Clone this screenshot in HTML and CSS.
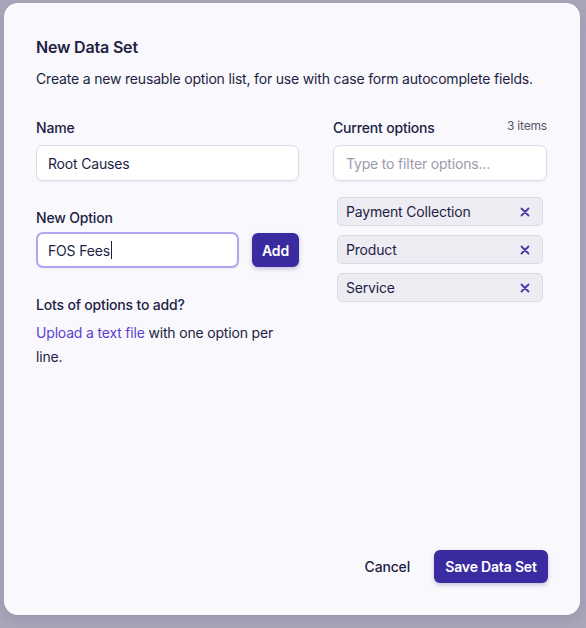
FILE: index.html
```html
<!DOCTYPE html>
<html lang="en">
<head>
<meta charset="utf-8">
<title>New Data Set</title>
<link rel="stylesheet" href="styles.css">
</head>
<body>
<div class="modal">
  <div class="modal-body">
    <h1 class="title">New Data Set</h1>
    <p class="desc">Create a new reusable option list, for use with case form autocomplete fields.</p>
    <div class="grid">
      <div class="col-left">
        <div class="label name-label">Name</div>
        <div class="input">Root Causes</div>
        <div class="label option-label">New Option</div>
        <div class="add-row">
          <div class="input input-focus">FOS Fees<span class="caret"></span></div>
          <button class="btn btn-add">Add</button>
        </div>
        <div class="lots">Lots of options to add?</div>
        <p class="upload"><span class="link">Upload a text file</span> with one option per line.</p>
      </div>
      <div class="col-right">
        <div class="right-head">
          <div class="label">Current options</div>
          <div class="count">3 items</div>
        </div>
        <div class="input placeholder">Type to filter options...</div>
        <div class="chips">
          <div class="chip"><span>Payment Collection</span><svg class="x" viewBox="0 0 10 10"><path d="M1.5 1.5L8.5 8.5M8.5 1.5L1.5 8.5"/></svg></div>
          <div class="chip"><span>Product</span><svg class="x" viewBox="0 0 10 10"><path d="M1.5 1.5L8.5 8.5M8.5 1.5L1.5 8.5"/></svg></div>
          <div class="chip"><span>Service</span><svg class="x" viewBox="0 0 10 10"><path d="M1.5 1.5L8.5 8.5M8.5 1.5L1.5 8.5"/></svg></div>
        </div>
      </div>
    </div>
  </div>
  <div class="footer">
    <button class="btn-cancel">Cancel</button>
    <button class="btn btn-save">Save Data Set</button>
  </div>
</div>
</body>
</html>
```

FILE: styles.css
```css
* { box-sizing: border-box; }
html, body { margin: 0; padding: 0; }
body {
  background: #a9a6b9;
  font-family: Inter, "Noto Sans", sans-serif;
  color: #221e44;
  letter-spacing: -0.18px;
  width: 586px;
  height: 628px;
  overflow: hidden;
}
.modal {
  margin: 3px 0 0 4px;
  width: 576px;
  height: 612px;
  background: #f9f8fc;
  border-radius: 14px;
  box-shadow: 0 4px 14px rgba(40, 30, 80, 0.12);
  padding: 32px 32px 32px 32px;
  display: flex;
  flex-direction: column;
}
.modal-body { flex: 1; }
.title {
  margin: 0;
  font-size: 16px;
  line-height: 24px;
  font-weight: 600;
}
.desc {
  margin: 10px 0 0;
  font-size: 14px;
  line-height: 20px;
}
.grid {
  margin-top: 29px;
  display: grid;
  grid-template-columns: 263px 214px;
  column-gap: 34px;
}
.label {
  font-size: 14px;
  line-height: 20px;
  font-weight: 500;
}
.name-label { margin-bottom: 7px; }
.option-label { margin-top: 27px; margin-bottom: 4px; }
.input {
  height: 36px;
  background: #ffffff;
  border: 1px solid #dedce8;
  border-radius: 7px;
  box-shadow: 0 1px 2px rgba(30, 20, 70, 0.06);
  padding: 0 11px;
  display: flex;
  align-items: center;
  font-size: 14px;
  color: #221e44;
}
.input-focus {
  flex: 1;
  border: 2px solid #b0a5f0;
  padding: 0 10px;
}
.caret {
  display: inline-block;
  width: 1px;
  height: 18px;
  background: #221e44;
  margin-left: 1px;
}
.add-row {
  display: flex;
  align-items: center;
  gap: 13px;
}
.btn {
  border: none;
  background: #3a2ca0;
  color: #ffffff;
  font-family: Inter, "Noto Sans", sans-serif;
  letter-spacing: -0.18px;
  font-size: 14px;
  font-weight: 600;
  border-radius: 6px;
  box-shadow: 0 2px 4px rgba(40, 30, 110, 0.25);
  cursor: pointer;
}
.btn-add {
  width: 47px;
  height: 34px;
  padding: 0;
}
.lots {
  margin-top: 27px;
  font-size: 14px;
  line-height: 20px;
  font-weight: 500;
}
.upload {
  margin: 6px 0 0;
  font-size: 14px;
  line-height: 24px;
}
.link { color: #5b42cf; }
.right-head {
  display: flex;
  justify-content: space-between;
  align-items: flex-start;
  margin-bottom: 7px;
}
.count {
  font-size: 12px;
  line-height: 18px;
  color: #55536a;
  margin-top: -1px;
}
.placeholder { color: #9c9aab; padding-left: 12px; }
.chips {
  margin-top: 12px;
  padding: 4px;
  display: flex;
  flex-direction: column;
  gap: 9px;
}
.chip {
  height: 29px;
  background: #edecf3;
  border: 1px solid #dcdbe5;
  border-radius: 5px;
  display: flex;
  align-items: center;
  justify-content: space-between;
  padding: 0 12px 0 8px;
  font-size: 14px;
  color: #221e44;
}
.x {
  width: 10px;
  height: 10px;
  stroke: #4a3aa8;
  stroke-width: 1.8;
  fill: none;
  stroke-linecap: round;
}
.footer {
  display: flex;
  justify-content: flex-end;
  align-items: center;
  gap: 12px;
}
.btn-cancel {
  border: none;
  background: transparent;
  font-family: Inter, "Noto Sans", sans-serif;
  letter-spacing: -0.18px;
  font-size: 14px;
  font-weight: 500;
  color: #221e44;
  padding: 0 12px;
  height: 33px;
}
.btn-save {
  width: 114px;
  height: 33px;
  padding: 0;
}
```
